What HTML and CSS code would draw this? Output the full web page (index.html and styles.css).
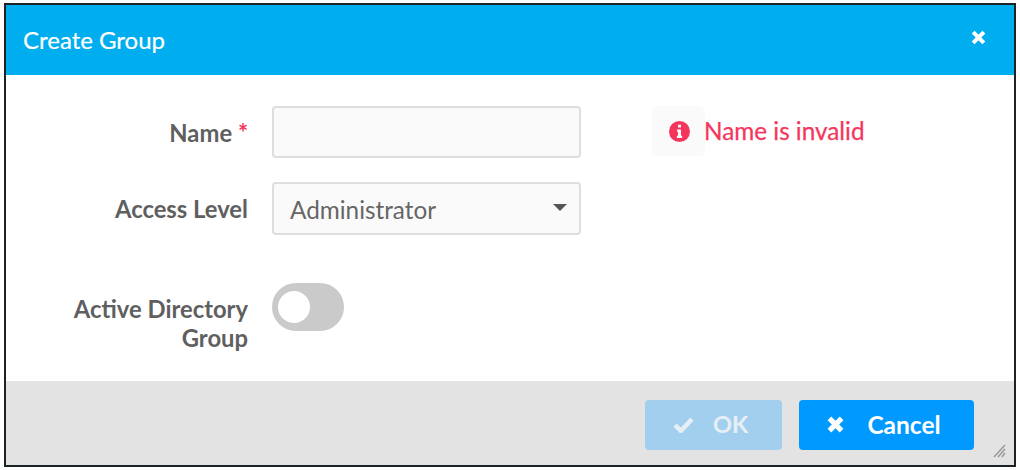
FILE: index.html
```html
<!DOCTYPE html>
<html lang="en">
<head>
    <meta charset="UTF-8">
    <title>Create Group</title>
    <link rel="stylesheet" href="styles.css">
</head>
<body>
    <div class="dialog">
        <div class="dialog-header">
            <h1>Create Group</h1>
            <svg class="close-icon" viewBox="0 0 14 14"><path d="M2 2l10 10M12 2L2 12"/></svg>
        </div>

        <div class="dialog-body">
            <div class="form-row">
                <label class="form-label">Name <span class="required">*</span></label>
                <input class="form-input" type="text">
                <div class="error-note">
                    <span class="error-icon-box">
                        <svg class="error-icon" viewBox="0 0 20 20">
                            <circle cx="10" cy="10" r="10"/>
                            <path class="error-i" d="M8.6 3.6h2.8v2.7H8.6zM7.6 8h3.8v6h1.1v2.3h-5V14h1.1v-3.7H7.6z"/>
                        </svg>
                    </span>
                    <span class="error-text">Name is invalid</span>
                </div>
            </div>
            <div class="form-row">
                <label class="form-label">Access Level</label>
                <div class="form-input form-select">
                    <span>Administrator</span>
                    <span class="caret"></span>
                </div>
            </div>
            <div class="form-row toggle-row">
                <label class="form-label">Active Directory<br>Group</label>
                <div class="toggle"><span class="toggle-knob"></span></div>
            </div>
        </div>

        <div class="dialog-footer">
            <button class="btn btn-disabled">
                <svg class="btn-icon check" viewBox="0 0 20 16"><path d="M2 8.5l5.5 5.5L18 3"/></svg>
                OK
            </button>
            <button class="btn">
                <svg class="btn-icon cross" viewBox="0 0 14 14"><path d="M2.5 2.5l9 9M11.5 2.5l-9 9"/></svg>
                Cancel
            </button>
            <svg class="resize-grip" viewBox="0 0 14 14"><path d="M1 13L12 1M5 13l7-8M9 13l3-4"/></svg>
        </div>
    </div>
</body>
</html>
```

FILE: styles.css
```css
* { box-sizing: border-box; }

body {
    margin: 0;
    padding: 3px 4px;
    background: #fff;
    font-family: Lato, "Open Sans", sans-serif;
    color: #555;
}

.dialog {
    width: 1012px;
    height: 464px;
    border: 2px solid #1c2327;
    display: flex;
    flex-direction: column;
}

.dialog-header {
    height: 70px;
    flex-shrink: 0;
    background: #00adef;
    color: #fff;
    display: flex;
    align-items: center;
    justify-content: space-between;
    padding: 0 28px 2px 17px;
}
.dialog-header h1 {
    margin: 0;
    font-size: 24px;
    font-weight: 400;
    -webkit-text-stroke: 0.2px #fff;
}
.close-icon {
    width: 15px;
    height: 15px;
    margin-top: -3px;
    fill: none;
    stroke: #fff;
    stroke-width: 3.8;
}

.dialog-body {
    flex: 1;
    padding-top: 31px;
    background: #fff;
}

.form-row {
    display: flex;
    align-items: center;
    margin-bottom: 24px;
}
.form-label {
    width: 242px;
    margin-right: 24px;
    padding-top: 2px;
    text-align: right;
    font-size: 23.8px;
    font-weight: 700;
    line-height: 29px;
    color: #5f5f5f;
}
.required { color: #f5365c; }

.form-input {
    width: 309px;
    height: 52px;
    border: 2px solid #dedede;
    border-radius: 4px;
    background: #fafafa;
}
.form-select {
    display: flex;
    align-items: center;
    justify-content: space-between;
    height: 53px;
    padding: 2px 12px 0 16px;
    font-size: 24.3px;
    color: #666;
}
.caret {
    width: 0;
    height: 0;
    margin-top: -5px;
    border-left: 7px solid transparent;
    border-right: 7px solid transparent;
    border-top: 7px solid #555;
}

.error-note {
    display: flex;
    align-items: center;
    margin-left: 71px;
    color: #f5365c;
    font-size: 24.3px;
    -webkit-text-stroke: 0.25px #f5365c;
}
.error-icon-box {
    width: 53px;
    height: 50px;
    margin-top: -2px;
    padding-left: 2px;
    display: flex;
    align-items: center;
    justify-content: center;
    background: #fafafa;
    border-radius: 6px;
}
.error-icon {
    width: 21px;
    height: 21px;
    fill: #f5365c;
}
.error-i { fill: #fafafa; }
.error-text { margin: -3px 0 0 -1px; }

.toggle-row {
    align-items: flex-start;
    margin-top: 48px;
}
.toggle-row .form-label { margin-top: 10px; }
.toggle {
    width: 72px;
    height: 48px;
    border-radius: 24px;
    background: #cacaca;
    padding: 8px 0 0 6px;
}
.toggle-knob {
    display: block;
    width: 32px;
    height: 32px;
    border-radius: 50%;
    background: #fff;
}

.dialog-footer {
    height: 84px;
    flex-shrink: 0;
    background: #e3e3e3;
    display: flex;
    justify-content: flex-end;
    gap: 17px;
    padding: 19px 40px 0 0;
    position: relative;
}
.btn {
    height: 50px;
    width: 175px;
    border: none;
    border-radius: 4px;
    padding: 0 6px 2px 0;
    background: #0099ff;
    color: #fff;
    font-family: inherit;
    font-size: 24.5px;
    font-weight: 700;
    display: flex;
    align-items: center;
    justify-content: center;
    gap: 22px;
}
.btn-disabled {
    width: 137px;
    background: #a3cfee;
    color: #e6eff5;
    gap: 19px;
    font-size: 23.5px;
}
.btn-icon { fill: none; stroke: currentColor; }
.check { width: 21px; height: 17px; stroke-width: 4.4; }
.cross { width: 19px; height: 19px; stroke-width: 3.8; }
.resize-grip {
    position: absolute;
    right: 7px;
    bottom: 7px;
    width: 14px;
    height: 14px;
    fill: none;
    stroke: #999;
    stroke-width: 1.5;
}
```
